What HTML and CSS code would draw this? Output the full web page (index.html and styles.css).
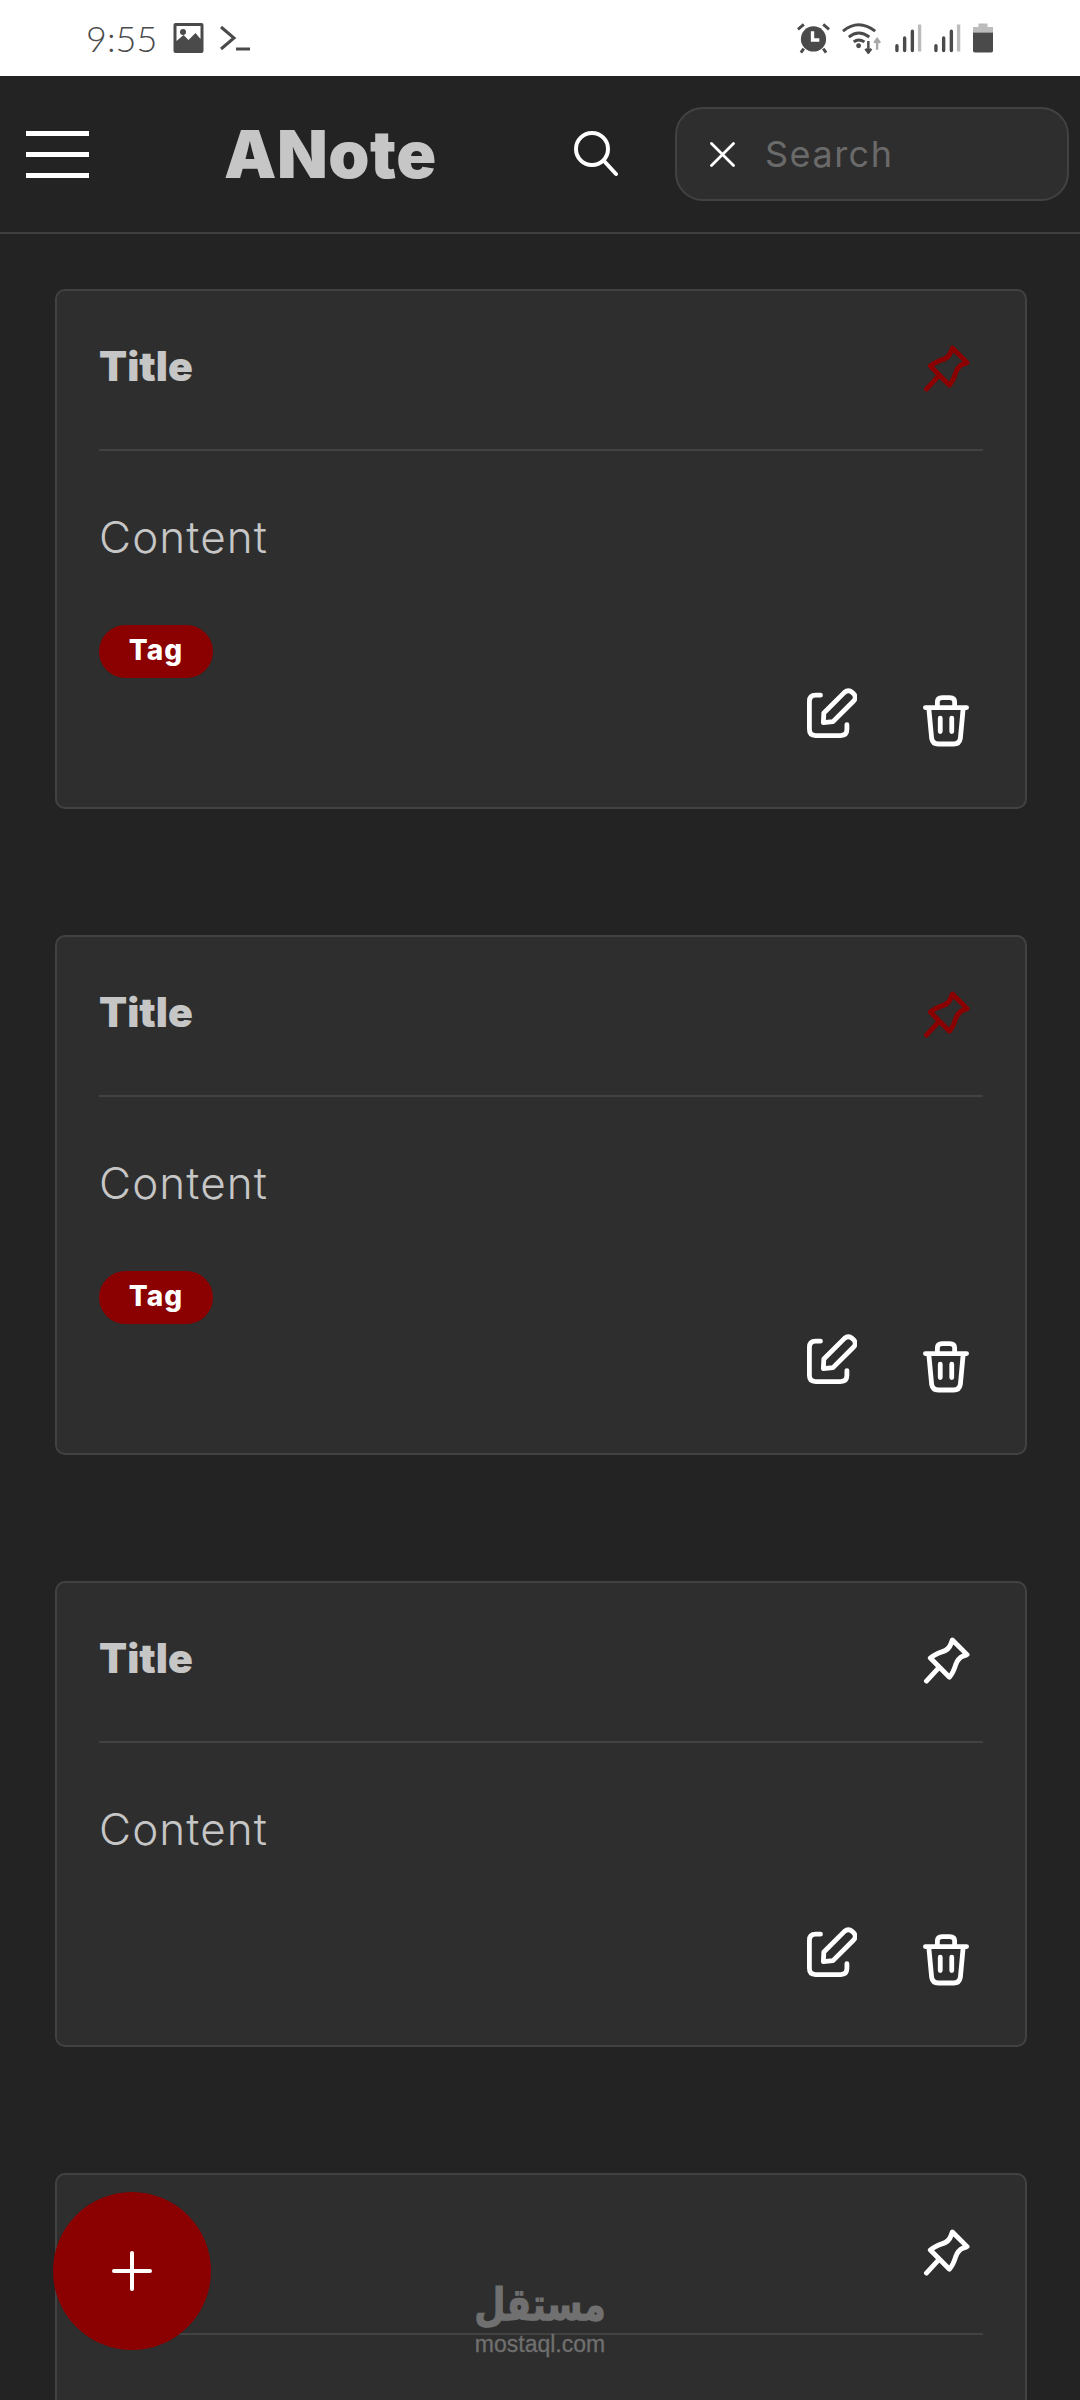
FILE: index.html
```html
<!DOCTYPE html>
<html lang="en">
<head>
    <meta charset="UTF-8">
    <meta name="viewport" content="width=device-width, initial-scale=1.0">
    <title>ANote</title>
    <link rel="stylesheet" href="styles.css">
</head>
<body>
    <svg class="sprites" width="0" height="0">
        <symbol id="pin" viewBox="0 0 48 48">
            <path d="M30 3 L45 18 L41 19.5 C36.5 21.5 35 24 33.5 28 C32 33 30.500 37 27 41 L7.500 21.5 C11.500 18 15.500 16.500 20 15 C24.500 13.500 27 11.500 28.500 7 Z M15.500 32 L3.500 45" fill="none" stroke="currentColor" stroke-width="5" stroke-linecap="round" stroke-linejoin="round"/>
        </symbol>
        <symbol id="edit" viewBox="0 0 52 52">
            <path d="M14 7.500 H9 Q2.500 7.500 2.500 14 V43 Q2.500 49.500 9 49.500 H35 Q41.500 49.500 41.500 43 V38" fill="none" stroke="currentColor" stroke-width="5" stroke-linecap="round"/>
            <path d="M17.500 26 L39 4.500 Q43 1 47 4.500 L48.500 6 Q52 10 48.500 13.500 L27 35 L17 36 Z" fill="none" stroke="currentColor" stroke-width="5" stroke-linejoin="round"/>
        </symbol>
        <symbol id="trash" viewBox="0 0 48 54">
            <path d="M2.500 13 H45.500 M6 13 L9 45 Q10 51 16 51 H32 Q38 51 39 45 L42 13 M15 13 V7 Q15 2.500 20 2.500 H28 Q33 2.500 33 7 V13 M18 24 V38 M30 24 V38" fill="none" stroke="currentColor" stroke-width="5" stroke-linecap="round" stroke-linejoin="round"/>
        </symbol>
    </svg>

    <div class="status-bar">
        <div class="status-left">
            <span class="status-time">9:55</span>
            <svg class="status-icon" width="31" height="30" viewBox="0 0 30 30"><path d="M2 0 H28 Q30 0 30 2 V28 Q30 30 28 30 H2 Q0 30 0 28 V2 Q0 0 2 0 Z M3 3 V18 L10 12 L15 17 L22 10 L27 16 V3 Z" fill="#4a4a4a" fill-rule="evenodd"/><circle cx="9.500" cy="9" r="3" fill="#4a4a4a"/></svg>
            <svg class="status-icon" width="30" height="26" viewBox="0 0 30 26"><path d="M1 2 L14 13 L1 24" fill="none" stroke="#4a4a4a" stroke-width="3"/><path d="M16 24 H30" stroke="#4a4a4a" stroke-width="3"/></svg>
        </div>
        <div class="status-right">
            <svg width="33" height="32" viewBox="0 0 34 32"><circle cx="17" cy="17" r="13" fill="#4a4a4a"/><path d="M16 9 V18 H23" fill="none" stroke="#fff" stroke-width="3.500"/><path d="M1 7 L7 2 M33 7 L27 2 M7 27 L4 31 M27 27 L30 31" stroke="#4a4a4a" stroke-width="3"/></svg>
            <svg width="41" height="32" viewBox="0 0 42 32"><path d="M1 9 Q17 -4 34 9 M7 15 Q17 7 28 15 M12 20 Q17 16 23 20" fill="none" stroke="#4a4a4a" stroke-width="3"/><circle cx="17" cy="24" r="2.500" fill="#4a4a4a"/><path d="M27 19 V31 M24 27 L27 31 L30 27" fill="none" stroke="#4a4a4a" stroke-width="2.500"/><path d="M36 28 V17 M33 21 L36 17 L39 21" fill="none" stroke="#a8a8a8" stroke-width="2.500"/></svg>
            <svg width="27" height="30" viewBox="0 0 28 30"><path d="M2 23 V28 M10 15 V28 M18 8 V28" stroke="#4a4a4a" stroke-width="3.500" stroke-linecap="round"/><path d="M25.500 1 V29" stroke="#bcbcbc" stroke-width="3.500"/></svg>
            <svg width="27" height="30" viewBox="0 0 28 30"><path d="M2 23 V28 M10 15 V28 M18 8 V28" stroke="#4a4a4a" stroke-width="3.500" stroke-linecap="round"/><path d="M25.500 1 V29" stroke="#bcbcbc" stroke-width="3.500"/></svg>
            <svg width="20" height="32" viewBox="0 0 22 32"><path d="M6 0 H16 V4 H22 V10 H0 V4 H6 Z" fill="#bcbcbc"/><path d="M0 10 H22 V30 Q22 32 20 32 H2 Q0 32 0 30 Z" fill="#4a4a4a"/></svg>
        </div>
    </div>

    <header class="app-bar">
        <div class="menu-btn"><span></span><span></span><span></span></div>
        <div class="app-title">ANote</div>
        <svg class="search-icon" width="44" height="46" viewBox="0 0 44 46"><circle cx="18" cy="18" r="16" fill="none" stroke="#fff" stroke-width="4"/><path d="M30 30 L42 43" stroke="#fff" stroke-width="4" stroke-linecap="round"/></svg>
        <div class="search-box">
            <svg width="25" height="25" viewBox="0 0 25 25"><path d="M1.500 1.500 L23.500 23.500 M23.500 1.500 L1.500 23.500" stroke="#fff" stroke-width="2.800" stroke-linecap="round"/></svg>
            <span class="search-placeholder">Search</span>
        </div>
    </header>

    <main class="notes">
        <article class="note note-tagged">
            <div class="note-head">
                <h2 class="note-title">Title</h2>
                <svg class="pin pinned"><use href="#pin"/></svg>
            </div>
            <p class="note-content">Content</p>
            <span class="tag">Tag</span>
            <div class="note-actions">
                <svg class="icon-edit"><use href="#edit"/></svg>
                <svg class="icon-trash"><use href="#trash"/></svg>
            </div>
        </article>

        <article class="note note-tagged">
            <div class="note-head">
                <h2 class="note-title">Title</h2>
                <svg class="pin pinned"><use href="#pin"/></svg>
            </div>
            <p class="note-content">Content</p>
            <span class="tag">Tag</span>
            <div class="note-actions">
                <svg class="icon-edit"><use href="#edit"/></svg>
                <svg class="icon-trash"><use href="#trash"/></svg>
            </div>
        </article>

        <article class="note">
            <div class="note-head">
                <h2 class="note-title">Title</h2>
                <svg class="pin"><use href="#pin"/></svg>
            </div>
            <p class="note-content">Content</p>
            <div class="note-actions">
                <svg class="icon-edit"><use href="#edit"/></svg>
                <svg class="icon-trash"><use href="#trash"/></svg>
            </div>
        </article>

        <article class="note note-cut">
            <div class="note-head">
                <h2 class="note-title">Title</h2>
                <svg class="pin"><use href="#pin"/></svg>
            </div>
        </article>
    </main>

    <button class="fab">
        <svg width="40" height="40" viewBox="0 0 40 40"><path d="M20 2 V38 M2 20 H38" stroke="#fff" stroke-width="4" stroke-linecap="round"/></svg>
    </button>

    <div class="watermark">
        <div class="watermark-ar" lang="ar" dir="rtl">مستقل</div>
        <div class="watermark-en">mostaql.com</div>
    </div>
</body>
</html>
```

FILE: styles.css
```css
* {
    box-sizing: border-box;
}

html, body {
    height: 2400px;
    overflow: hidden;
}

body {
    margin: 0;
    padding: 0;
    background: #232323;
    font-family: 'Inter', 'Liberation Sans', sans-serif;
    color: #c6c6c6;
    position: relative;
    display: flex;
    flex-direction: column;
}

.sprites {
    position: absolute;
}

.status-bar {
    height: 76px;
    flex: none;
    background: #fff;
    display: flex;
    justify-content: space-between;
    align-items: center;
    padding: 0 87px 0 86px;
}

.status-left, .status-right {
    display: flex;
    align-items: center;
}

.status-left {
    gap: 16px;
}

.status-right {
    gap: 12px;
}

.status-time {
    font-family: 'Lato', sans-serif;
    font-weight: 300;
    font-size: 36px;
    color: #4a4a4a;
}

.app-bar {
    height: 158px;
    flex: none;
    display: flex;
    align-items: center;
    background: #232323;
    border-bottom: 2px solid #3f3f3f;
    padding: 0 11px 0 26px;
}

.menu-btn {
    width: 63px;
    height: 47px;
    display: flex;
    flex-direction: column;
    justify-content: space-between;
}

.menu-btn span {
    display: block;
    height: 5px;
    background: #fff;
}

.app-title {
    margin-left: 135px;
    width: 350px;
    font-size: 66px;
    font-weight: 900;
    letter-spacing: 0.5px;
    color: #c6c6c6;
}

.search-icon {
    margin-right: 57px;
}

.search-box {
    width: 394px;
    height: 94px;
    border: 2px solid #424242;
    border-radius: 28px;
    background: #2e2e2e;
    display: flex;
    align-items: center;
    gap: 30px;
    padding-left: 33px;
}

.search-placeholder {
    font-size: 36px;
    letter-spacing: 1.5px;
    color: #6a6a6a;
}

.notes {
    flex: 1;
    min-height: 0;
    overflow: hidden;
    display: flex;
    flex-direction: column;
    gap: 126px;
    padding: 55px 53px 0 55px;
}

.note {
    flex: none;
    background: #2e2e2e;
    border: 2px solid #424242;
    border-radius: 10px;
    padding: 0 42px 59px;
}

.note-tagged {
    padding-bottom: 60px;
}

.note-cut {
    flex: 1 0 auto;
    margin-bottom: -20px;
}

.note-head {
    height: 160px;
    padding-bottom: 8px;
    border-bottom: 2px solid #424242;
    display: flex;
    justify-content: space-between;
    align-items: center;
}

.note-title {
    margin: 0;
    font-size: 41px;
    font-weight: 900;
    color: #c6c6c6;
}

.pin {
    width: 47px;
    height: 47px;
    margin: 5px 13px 0 0;
    color: #fff;
}

.pin.pinned {
    color: #8b0000;
}

.note-content {
    margin: 59px 0 0;
    font-size: 44px;
    font-weight: 300;
    letter-spacing: 1.1px;
    line-height: 54px;
    color: #c6c6c6;
}

.tag {
    display: block;
    width: 114px;
    height: 53px;
    margin-top: 61px;
    border-radius: 27px;
    background: #8b0000;
    color: #fff;
    font-size: 28px;
    font-weight: 800;
    letter-spacing: 1px;
    line-height: 50px;
    text-align: center;
}

.note-actions {
    display: flex;
    align-items: flex-start;
    justify-content: flex-end;
    gap: 66px;
    margin: 71px 14px 0 0;
}

.tag + .note-actions {
    margin-top: 10px;
}

.icon-edit {
    width: 50px;
    height: 50px;
}

.icon-trash {
    width: 46px;
    height: 52px;
    margin-top: 7px;
}

.note-actions svg {
    color: #fff;
}

.fab {
    position: absolute;
    left: 53px;
    top: 2192px;
    width: 158px;
    height: 158px;
    border: none;
    border-radius: 50%;
    background: #8b0000;
    display: flex;
    align-items: center;
    justify-content: center;
    padding: 0;
}

.watermark {
    position: absolute;
    left: 470px;
    top: 2288px;
    width: 140px;
    text-align: center;
    color: #707070;
}

.watermark-ar {
    font-family: 'DejaVu Sans', sans-serif;
    font-size: 36px;
    font-weight: 700;
    line-height: 44px;
    -webkit-text-stroke: 1px #707070;
    transform: scaleY(1.25);
    transform-origin: center bottom;
}

.watermark-en {
    font-family: 'Liberation Sans', sans-serif;
    font-size: 23px;
    line-height: 24px;
    -webkit-text-stroke: 0.3px #707070;
}
```
